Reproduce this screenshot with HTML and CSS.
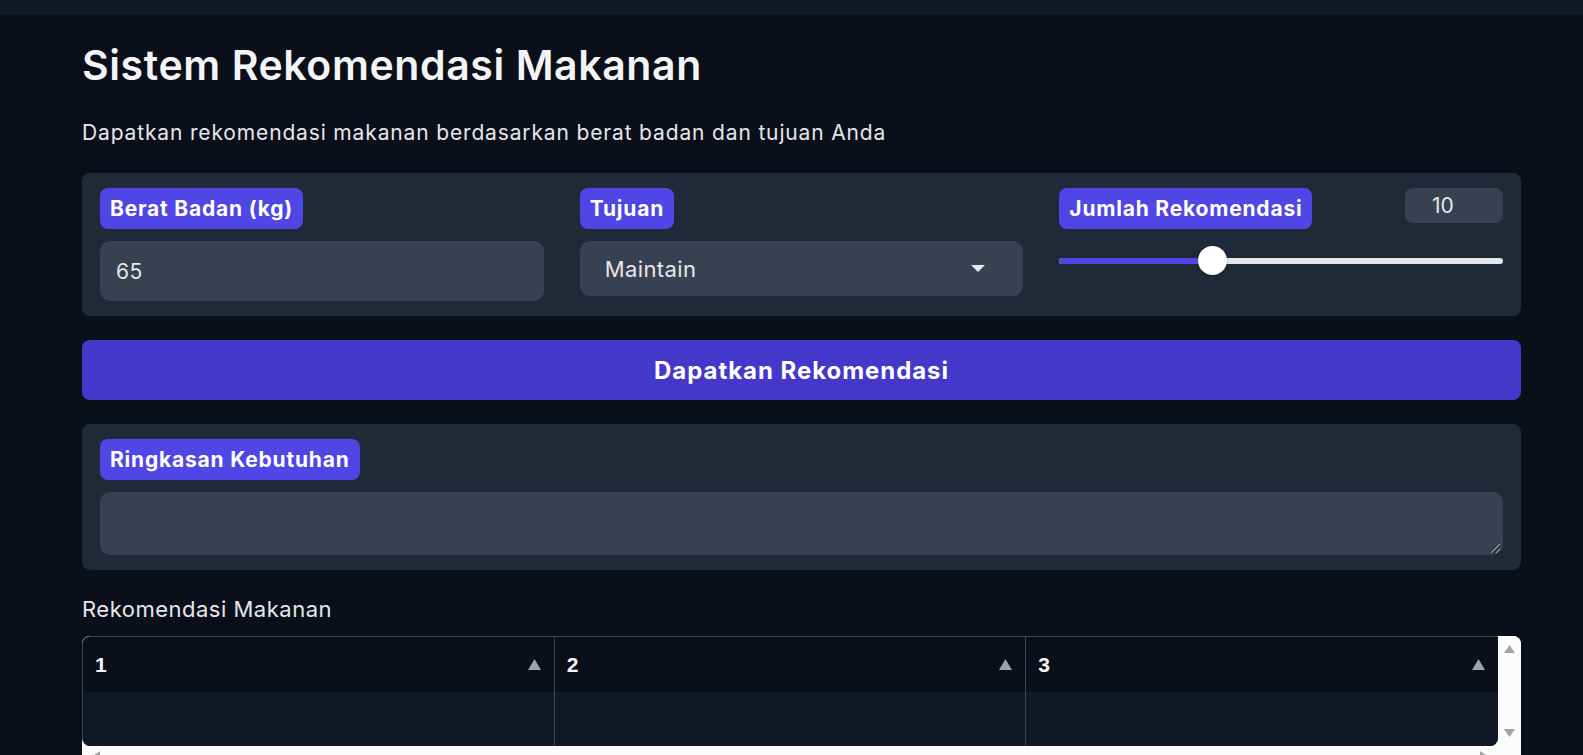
FILE: index.html
```html
<!DOCTYPE html>
<html lang="id">
<head>
<meta charset="utf-8">
<title>Sistem Rekomendasi Makanan</title>
<link rel="stylesheet" href="styles.css">
</head>
<body>
<div class="topbar"></div>
<main class="container">
  <h1 class="title">Sistem Rekomendasi Makanan</h1>
  <p class="subtitle">Dapatkan rekomendasi makanan berdasarkan berat badan dan tujuan Anda</p>

  <section class="panel inputs">
    <div class="field">
      <span class="badge">Berat Badan (kg)</span>
      <div class="textbox">65</div>
    </div>
    <div class="field">
      <span class="badge">Tujuan</span>
      <div class="dropdown">
        <span>Maintain</span>
        <svg class="caret" width="14" height="7" viewBox="0 0 14 7"><polygon points="0,0 14,0 7,7" fill="#e5e7eb"/></svg>
      </div>
    </div>
    <div class="field">
      <div class="slider-head">
        <span class="badge">Jumlah Rekomendasi</span>
        <div class="numbox">10</div>
      </div>
      <div class="slider">
        <div class="track"><div class="fill" style="width:34.4%"></div></div>
        <div class="thumb" style="left:34.4%"></div>
      </div>
    </div>
  </section>

  <button class="primary">Dapatkan Rekomendasi</button>

  <section class="panel summary">
    <span class="badge">Ringkasan Kebutuhan</span>
    <div class="textarea">
      <svg class="resize" width="11" height="11" viewBox="0 0 11 11">
        <path d="M10 1 L1 10" stroke="#111827" stroke-width="3"/>
        <path d="M10 1 L1 10" stroke="#9ca3af" stroke-width="1.5"/>
        <path d="M10 6 L6 10" stroke="#111827" stroke-width="3"/>
        <path d="M10 6 L6 10" stroke="#9ca3af" stroke-width="1.5"/>
      </svg>
    </div>
  </section>

  <div class="table-label">Rekomendasi Makanan</div>

  <div class="table-frame">
    <div class="table-area">
      <div class="th"><span>1</span><svg width="13" height="11" viewBox="0 0 13 11"><polygon points="6.5,0 13,11 0,11" fill="#9ca3af"/></svg></div>
      <div class="th"><span>2</span><svg width="13" height="11" viewBox="0 0 13 11"><polygon points="6.5,0 13,11 0,11" fill="#9ca3af"/></svg></div>
      <div class="th last"><span>3</span><svg width="13" height="11" viewBox="0 0 13 11"><polygon points="6.5,0 13,11 0,11" fill="#9ca3af"/></svg></div>
      <div class="td"></div>
      <div class="td"></div>
      <div class="td last"></div>
    </div>
    <div class="vscroll">
      <svg width="11" height="8" viewBox="0 0 11 8"><polygon points="5.5,0 11,8 0,8" fill="#a3a3a3"/></svg>
      <svg width="11" height="8" viewBox="0 0 11 8"><polygon points="0,0 11,0 5.5,8" fill="#a3a3a3"/></svg>
    </div>
    <div class="hscroll">
      <svg width="8" height="11" viewBox="0 0 8 11"><polygon points="0,5.5 8,0 8,11" fill="#a3a3a3"/></svg>
      <svg width="8" height="11" viewBox="0 0 8 11"><polygon points="8,5.5 0,0 0,11" fill="#a3a3a3"/></svg>
    </div>
    <div class="corner"></div>
  </div>
</main>
</body>
</html>
```

FILE: styles.css
```css
* { box-sizing: border-box; }

html, body {
  margin: 0;
  height: 100%;
  overflow: hidden;
}

body {
  background: #0b0f19;
  color: #f3f4f6;
  font-family: Inter, "Noto Sans", sans-serif;
}

.topbar {
  height: 15px;
  background: #111827;
}

.container {
  margin-left: 82px;
  width: 1439px;
}

.title {
  margin: 26px 0 0;
  font-size: 41px;
  line-height: 49px;
  font-weight: 600;
  letter-spacing: 0.6px;
  color: #f3f4f6;
}

.subtitle {
  margin: 29px 0 0;
  font-size: 21px;
  line-height: 28px;
  letter-spacing: 0.85px;
  color: #e5e7eb;
}

.panel {
  background: #1f2937;
  border-radius: 8px;
  padding: 15px 18px;
}

.inputs {
  margin-top: 26px;
  display: grid;
  grid-template-columns: repeat(3, 1fr);
  column-gap: 36px;
}

.field {
  display: flex;
  flex-direction: column;
  align-items: flex-start;
  gap: 12px;
}

.badge {
  display: inline-flex;
  align-items: center;
  height: 41px;
  padding: 0 10px;
  background: #4f46e5;
  border-radius: 8px;
  color: #ffffff;
  font-size: 21px;
  font-weight: 700;
  letter-spacing: 0.8px;
  white-space: nowrap;
}

.textbox {
  align-self: stretch;
  height: 60px;
  padding: 0 16px;
  display: flex;
  align-items: center;
  background: #374151;
  border-radius: 10px;
  font-size: 21px;
  letter-spacing: 0.4px;
  color: #e5e7eb;
}

.dropdown {
  align-self: stretch;
  height: 55px;
  padding: 0 38px 0 25px;
  display: flex;
  align-items: center;
  justify-content: space-between;
  background: #374151;
  border-radius: 10px;
  font-size: 22px;
  letter-spacing: 0.4px;
  color: #e5e7eb;
}

.slider-head {
  align-self: stretch;
  display: flex;
  justify-content: space-between;
  align-items: flex-start;
}

.numbox {
  width: 98px;
  height: 35px;
  padding-left: 27px;
  display: flex;
  align-items: center;
  background: #374151;
  border-radius: 8px;
  font-size: 21px;
  color: #e5e7eb;
}

.slider {
  align-self: stretch;
  position: relative;
  height: 29px;
  margin-top: 5px;
  display: flex;
  align-items: center;
}

.track {
  flex: 1;
  height: 6px;
  border-radius: 3px;
  background: #e5e7eb;
  display: flex;
  overflow: hidden;
}

.fill {
  background: #4f46e5;
}

.thumb {
  position: absolute;
  top: 0;
  width: 29px;
  height: 29px;
  margin-left: -14px;
  border-radius: 50%;
  background: #ffffff;
  box-shadow: 0 1px 2px rgba(0, 0, 0, 0.3);
}

.primary {
  display: flex;
  align-items: center;
  justify-content: center;
  width: 100%;
  height: 60px;
  margin-top: 24px;
  border: 0;
  border-radius: 8px;
  background: #4338ca;
  color: #ffffff;
  font-family: Inter, "Noto Sans", sans-serif;
  font-size: 24px;
  font-weight: 700;
  letter-spacing: 0.95px;
}

.summary {
  margin-top: 24px;
  display: flex;
  flex-direction: column;
  align-items: flex-start;
  gap: 12px;
}

.textarea {
  align-self: stretch;
  position: relative;
  height: 63px;
  background: #374151;
  border-radius: 10px;
}

.resize {
  position: absolute;
  right: 2px;
  bottom: 1px;
}

.table-label {
  margin-top: 25px;
  font-size: 22px;
  line-height: 28px;
  letter-spacing: 0.5px;
  color: #e5e7eb;
}

.table-frame {
  margin-top: 13px;
  display: grid;
  grid-template-columns: 1fr 23px;
  grid-template-rows: 110px 23px;
  background: #fcfcfc;
  border-radius: 8px;
  overflow: hidden;
}

.table-area {
  display: grid;
  grid-template-columns: repeat(3, 1fr);
  grid-template-rows: 55px 54px;
  border-top: 1px solid #3b4556;
  border-left: 1px solid #3b4556;
  border-radius: 8px 0 8px 8px;
  overflow: hidden;
  background: #111827;
}

.th {
  display: flex;
  align-items: center;
  justify-content: space-between;
  padding: 0 13px 0 12px;
  background: #0b0f19;
  border-right: 1px solid #3b4556;
  font-family: "Liberation Sans", Arial, sans-serif;
  font-size: 21px;
  font-weight: 700;
  color: #f3f4f6;
}

.td {
  background: #111827;
  border-right: 1px solid #3b4556;
}

.th.last, .td.last {
  border-right: 0;
}

.vscroll {
  display: flex;
  flex-direction: column;
  justify-content: space-between;
  align-items: center;
  padding: 9px 0 9px;
  background: #fcfcfc;
}

.hscroll {
  display: flex;
  justify-content: space-between;
  align-items: flex-start;
  padding: 5px 10px 0 10px;
  background: #fcfcfc;
}

.corner {
  background: #fcfcfc;
}
```
